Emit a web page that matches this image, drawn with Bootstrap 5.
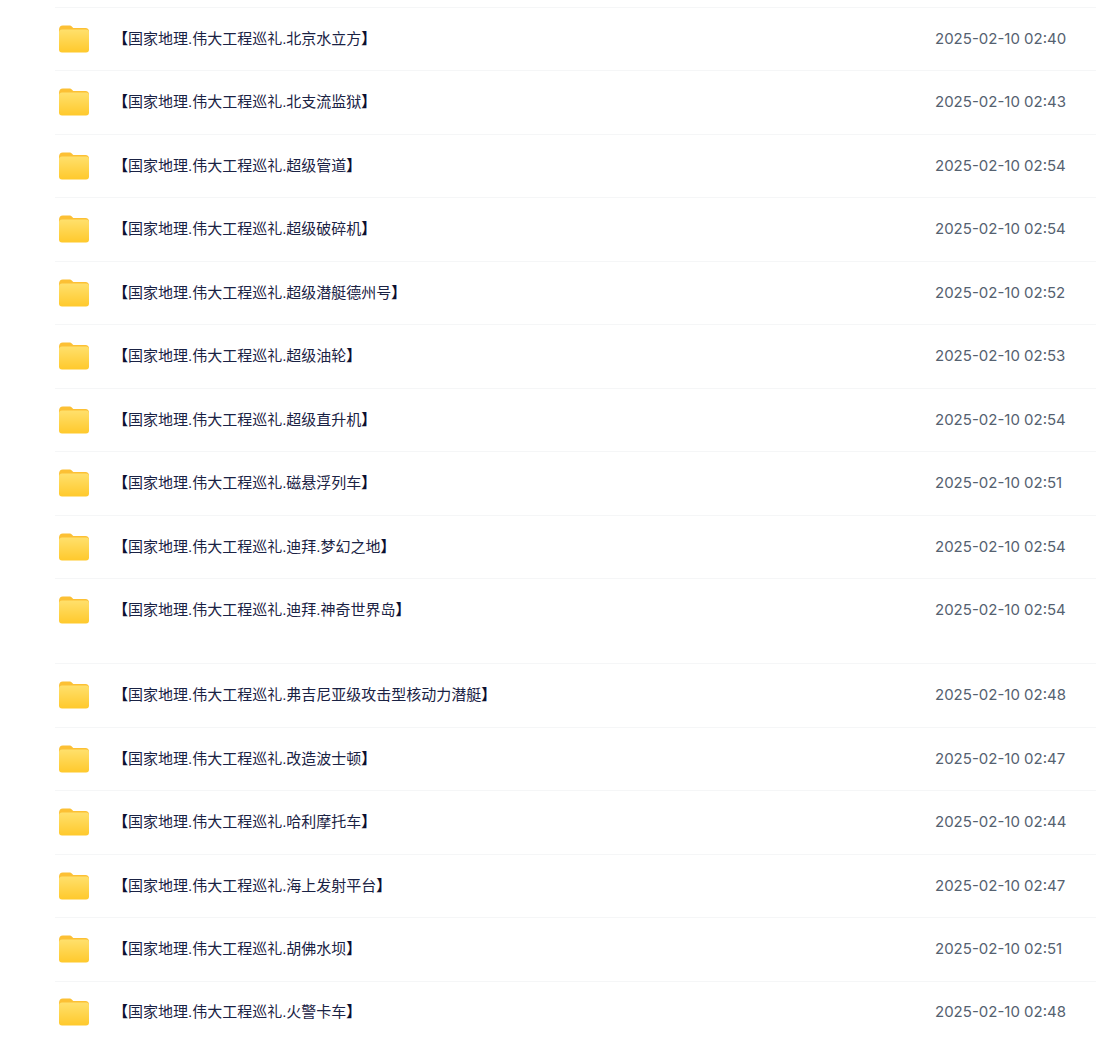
<!DOCTYPE html>
<html lang="zh-CN">

<head>
    <meta charset="UTF-8">
    <meta name="viewport" content="width=device-width, initial-scale=1.0">
    <title>文件列表</title>
    <link href="https://cdn.jsdelivr.net/npm/bootstrap@5.3.0/dist/css/bootstrap.min.css" rel="stylesheet">
    <style>
        html, body { height: 1038px; overflow: hidden; }
        body { background: #fff; }
        .file-page { padding: 6.5px 0 0 55px; }
        .file-group { margin-bottom: 21.5px; }
        .file-row { height: 63.5px; border-top: 1px solid #f5f6f7; }
        .file-icon { width: 32px; height: 32px; margin-left: 3px; margin-right: 23px; flex: none; }
        .file-name { font-family: "Liberation Sans", "Noto Sans CJK SC", sans-serif; font-size: 15px; color: #1a2244; }
        .file-brk { font-weight: 700; color: #0c1030; }
        .file-date { font-family: Inter, sans-serif; font-size: 15px; color: #556170; width: 161px; flex: none; }
        .file-group:last-child .file-row:last-child { border-bottom: 1px solid #f5f6f7; }
    </style>
</head>

<body>
    <div class="file-page" id="fileList"></div>

    <svg width="0" height="0" class="d-block">
        <defs>
            <linearGradient id="folderFront" x1="0" y1="0" x2="0" y2="1">
                <stop offset="0" stop-color="#ffe06c"/>
                <stop offset="1" stop-color="#ffc92c"/>
            </linearGradient>
            <symbol id="folderIcon" viewBox="0 0 32 32">
                <path d="M1 7C1 3.9 2.6 2.5 4.8 2.5h6.4c1.6 0 2.4.7 3.3 1.7l.8.9h12.2c2.2 0 3.5 1.3 3.5 3.5V14H1z" fill="#fcc034"/>
                <rect x="1" y="6.5" width="30" height="23" rx="3" fill="url(#folderFront)"/>
            </symbol>
        </defs>
    </svg>

    <script src="https://cdn.jsdelivr.net/npm/bootstrap@5.3.0/dist/js/bootstrap.bundle.min.js"></script>
    <script>
        const groups = [
            [
                ['北京水立方', '02:40'], ['北支流监狱', '02:43'], ['超级管道', '02:54'], ['超级破碎机', '02:54'],
                ['超级潜艇德州号', '02:52'], ['超级油轮', '02:53'], ['超级直升机', '02:54'], ['磁悬浮列车', '02:51'],
                ['迪拜.梦幻之地', '02:54'], ['迪拜.神奇世界岛', '02:54']
            ],
            [
                ['弗吉尼亚级攻击型核动力潜艇', '02:48'], ['改造波士顿', '02:47'], ['哈利摩托车', '02:44'],
                ['海上发射平台', '02:47'], ['胡佛水坝', '02:51'], ['火警卡车', '02:48']
            ]
        ];

        document.getElementById('fileList').innerHTML = groups.map(function (rows) {
            return '<div class="file-group">' + rows.map(function (r) {
                return `<div class="file-row d-flex align-items-center">
                    <svg class="file-icon"><use href="#folderIcon"></use></svg>
                    <div class="file-name flex-grow-1"><span class="file-brk">【</span>国家地理.伟大工程巡礼.${r[0]}<span class="file-brk">】</span></div>
                    <div class="file-date">2025-02-10 ${r[1]}</div>
                </div>`;
            }).join('') + '</div>';
        }).join('');
    </script>
</body>

</html>
